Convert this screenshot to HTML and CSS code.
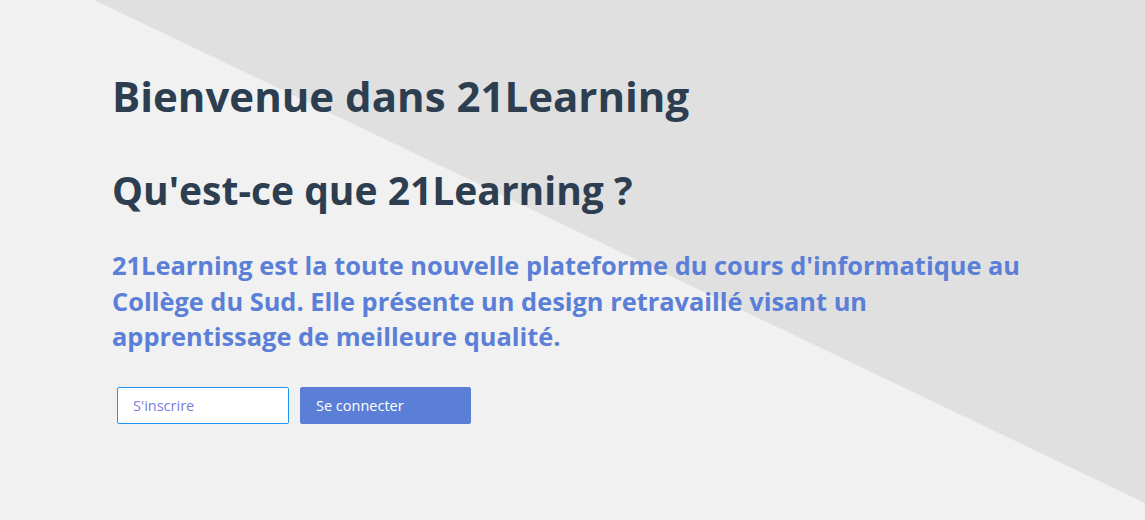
FILE: index.html
```html
<!DOCTYPE html>
<html lang="fr">
<head>
<meta charset="utf-8">
<title>21Learning</title>
<link rel="stylesheet" href="styles.css">
</head>
<body>
<div class="backdrop"></div>
<main class="hero">
  <h1 class="title">Bienvenue dans 21Learning</h1>
  <h2 class="subtitle">Qu'est-ce que 21Learning ?</h2>
  <p class="lead">21Learning est la toute nouvelle plateforme du cours d'informatique au<br>Collège du Sud. Elle présente un design retravaillé visant un<br>apprentissage de meilleure qualité.</p>
  <div class="actions">
    <button class="btn btn-outline" type="button">S'inscrire</button>
    <button class="btn btn-primary" type="button">Se connecter</button>
  </div>
</main>
</body>
</html>
```

FILE: styles.css
```css
html, body {
  margin: 0;
  padding: 0;
}
body {
  width: 1145px;
  height: 520px;
  overflow: hidden;
  background: #f1f1f1;
  font-family: "Open Sans", "Noto Sans", sans-serif;
  position: relative;
}
.backdrop {
  position: absolute;
  inset: 0;
  background: #e0e0e0;
  clip-path: polygon(94px 0, 100% 0, 100% 503px);
  z-index: 0;
}
.hero {
  position: relative;
  z-index: 1;
  padding: 70px 0 0 112px;
  display: flex;
  flex-direction: column;
}
.title {
  margin: 0;
  font-size: 42px;
  line-height: 52px;
  font-weight: 700;
  color: #2c3e50;
}
.subtitle {
  margin: 44px 0 0;
  font-size: 39px;
  line-height: 48px;
  font-weight: 700;
  color: #2c3e50;
}
.lead {
  margin: 34px 0 0;
  font-size: 25.4px;
  line-height: 35.5px;
  font-weight: 700;
  color: #5b7fd6;
}
.actions {
  display: flex;
  gap: 11px;
  margin: 32px 0 0 5px;
}
.btn {
  width: 172px;
  height: 37px;
  box-sizing: border-box;
  padding: 0 15px;
  text-align: left;
  font-family: "Open Sans", "Noto Sans", sans-serif;
  font-size: 14.5px;
  border-radius: 2px;
  cursor: pointer;
}
.btn-outline {
  background: #ffffff;
  border: 1px solid #2196f3;
  color: #7b7de0;
}
.btn-primary {
  background: #5b7fd6;
  border: 1px solid #5b7fd6;
  color: #ffffff;
  width: 171px;
}
```
